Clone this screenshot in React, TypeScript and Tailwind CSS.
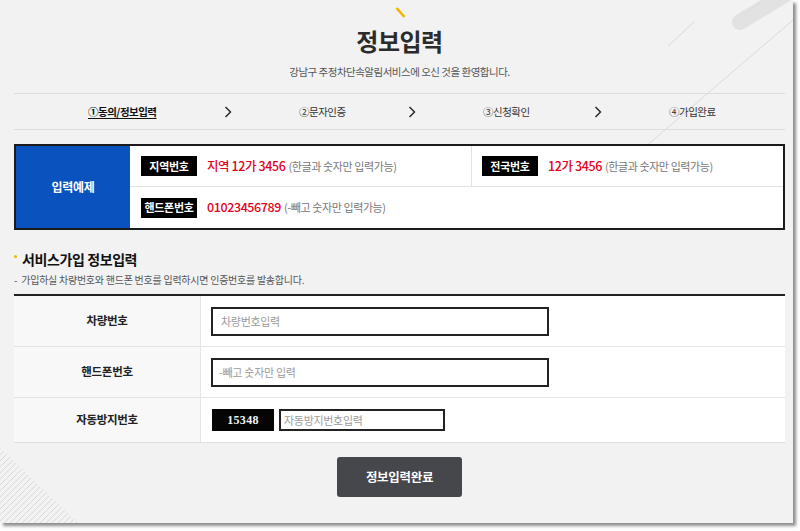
import React from "react";

const KR = { fontFamily: '"Noto Sans CJK KR", "Noto Sans", sans-serif' };

function Chevron() {
  return (
    <svg width="12" height="14" viewBox="0 0 12 14" className="shrink-0">
      <polyline points="3.5,2 8.5,7 3.5,12" fill="none" stroke="#222" strokeWidth="1.4" />
    </svg>
  );
}

function Tag({ children }: { children: React.ReactNode }) {
  return (
    <div className="w-[56px] h-[20px] bg-black text-white font-bold text-[11px] leading-none flex items-center justify-center shrink-0 tracking-[-0.3px]">
      {children}
    </div>
  );
}

export default function App() {
  return (
    <div className="w-[800px] h-[531px] bg-white" style={KR}>
      <div className="relative w-[793px] h-[523px] bg-[#f2f2f2] overflow-hidden shadow-[3px_3px_3px_rgba(0,0,0,0.45)]">
        {/* decorations */}
        <svg className="absolute left-0 top-0 pointer-events-none" width="793" height="523">
          <line x1="740" y1="22" x2="786" y2="-6" stroke="#e2e2e2" strokeWidth="16" strokeLinecap="round" />
          <line x1="668" y1="46" x2="694" y2="22" stroke="#d8d8d8" strokeWidth="1" />
          <line x1="800" y1="14" x2="630" y2="160" stroke="#dadada" strokeWidth="1" />
          <line x1="762" y1="0" x2="742" y2="17" stroke="#dcdcdc" strokeWidth="1" />
          <defs>
            <clipPath id="tri">
              <polygon points="0,448 0,523 78,523" />
            </clipPath>
          </defs>
          <g clipPath="url(#tri)" stroke="#d9d9d9" strokeWidth="1">
            {Array.from({ length: 30 }).map((_, i) => (
              <line key={i} x1={-80 + i * 6} y1={523} x2={-80 + i * 6 + 80} y2={443} />
            ))}
          </g>
        </svg>

        <div className="relative pl-[14px] pr-[8px] flex flex-col">
          {/* slash */}
          <div className="flex justify-center pt-[7px] pl-[2px]">
            <svg width="11" height="11" viewBox="0 0 11 11">
              <line x1="1.5" y1="1" x2="9.5" y2="10" stroke="#f4b400" strokeWidth="2.6" />
            </svg>
          </div>
          <h1 className="mt-[8px] text-center text-[24px] leading-[30px] font-bold text-[#2b2b2b] tracking-[-0.5px]">정보입력</h1>
          <p className="mt-[8px] text-center text-[10.5px] leading-[16px] text-[#555] tracking-[-0.5px]">
            강남구 주정차단속알림서비스에 오신 것을 환영합니다.
          </p>

          {/* steps */}
          <div className="mt-[13px] border-t border-b border-[#dcdcdc] h-[37px] flex items-center pl-[74px] text-[10.5px] tracking-[-0.5px] text-[#333]">
            <div className="w-[134px]">
              <span className="underline underline-offset-2 font-bold text-[#111]">①동의/정보입력</span>
            </div>
            <Chevron />
            <div className="w-[107px] ml-[65px]">②문자인증</div>
            <Chevron />
            <div className="w-[109px] ml-[65px]">③신청확인</div>
            <Chevron />
            <div className="ml-[65px]">④가입완료</div>
          </div>

          {/* example box */}
          <div className="mt-[14px] flex border-2 border-[#1a1a1a] h-[86px]">
            <div className="w-[114px] bg-[#0a52bd] flex items-center justify-center text-white font-bold text-[12px] tracking-[-0.3px]">
              입력예제
            </div>
            <div className="flex-1 flex flex-col bg-white">
              <div className="flex h-[41px] border-b border-[#e2e2e2]">
                <div className="w-[342px] border-r border-[#e2e2e2] flex items-center pl-[11px]">
                  <Tag>지역번호</Tag>
                  <span className="ml-[10px] text-[12.5px] font-medium text-[#e3001b] tracking-[-0.4px]">지역 12가 3456</span>
                  <span className="ml-[3px] text-[11px] text-[#777] tracking-[-0.4px]">(한글과 숫자만 입력가능)</span>
                </div>
                <div className="flex-1 flex items-center pl-[10px]">
                  <Tag>전국번호</Tag>
                  <span className="ml-[10px] text-[12.5px] font-medium text-[#e3001b] tracking-[-0.4px]">12가 3456</span>
                  <span className="ml-[3px] text-[11px] text-[#777] tracking-[-0.4px]">(한글과 숫자만 입력가능)</span>
                </div>
              </div>
              <div className="flex-1 flex items-center pl-[11px]">
                <Tag>핸드폰번호</Tag>
                <span className="ml-[10px] text-[12.5px] font-medium text-[#e3001b] tracking-[-0.4px]">01023456789</span>
                <span className="ml-[3px] text-[11px] text-[#777] tracking-[-0.4px]">(-빼고 숫자만 입력가능)</span>
              </div>
            </div>
          </div>

          {/* section heading */}
          <div className="mt-[20px] flex items-center h-[18px]">
            <span className="w-[3px] h-[3px] rounded-full bg-[#f4b400] mr-[5px] mt-[-6px]"></span>
            <h2 className="text-[14px] font-bold text-[#111] tracking-[-0.4px] leading-[18px]">서비스가입 정보입력</h2>
          </div>
          <p className="mt-[5px] text-[10px] leading-[14px] text-[#555] tracking-[-0.25px]">
            <span className="mr-[4px]">-</span>가입하실 차량번호와 핸드폰 번호를 입력하시면 인증번호를 발송합니다.
          </p>

          {/* form table */}
          <div className="mt-[7px] border-t-2 border-t-[#222] border-b border-b-[#dedede] bg-white">
            <div className="flex h-[51px] border-b border-[#e4e4e4]">
              <div className="w-[187px] bg-[#f8f8f8] border-r border-[#e6e6e6] flex items-center justify-center text-[11.5px] font-bold text-[#222] tracking-[-0.3px]">
                차량번호
              </div>
              <div className="flex-1 flex items-center pl-[10px]">
                <input
                  className="w-[338px] h-[29px] border-2 border-[#222] bg-white pl-[8px] text-[11px] outline-none placeholder:text-[#9a9a9a] tracking-[-0.3px]"
                  placeholder="차량번호입력"
                />
              </div>
            </div>
            <div className="flex h-[51px] border-b border-[#e4e4e4]">
              <div className="w-[187px] bg-[#f8f8f8] border-r border-[#e6e6e6] flex items-center justify-center text-[11.5px] font-bold text-[#222] tracking-[-0.3px]">
                핸드폰번호
              </div>
              <div className="flex-1 flex items-center pl-[10px]">
                <input
                  className="w-[338px] h-[29px] border-2 border-[#222] bg-white pl-[6px] text-[11px] outline-none placeholder:text-[#9a9a9a] tracking-[-0.3px]"
                  placeholder="-빼고 숫자만 입력"
                />
              </div>
            </div>
            <div className="flex h-[44px]">
              <div className="w-[187px] bg-[#f8f8f8] border-r border-[#e6e6e6] flex items-center justify-center text-[11.5px] font-bold text-[#222] tracking-[-0.3px]">
                자동방지번호
              </div>
              <div className="flex-1 flex items-center pl-[11px]">
                <div
                  className="w-[62px] h-[22px] bg-[#050505] flex items-center justify-center text-[#f4f4f4] text-[11px] font-bold tracking-[0.3px]"
                  style={{ fontFamily: '"Liberation Serif", serif' }}
                >
                  <span className="text-[12px]">15348</span>
                </div>
                <input
                  className="ml-[5px] w-[166px] h-[22px] border-2 border-[#222] bg-white pl-[3px] text-[11px] outline-none placeholder:text-[#9a9a9a] tracking-[-0.3px]"
                  placeholder="자동방지번호입력"
                />
              </div>
            </div>
          </div>

          {/* button */}
          <div className="mt-[14px] flex justify-center">
            <button className="w-[125px] h-[40px] rounded-[3px] bg-[#46464d] text-white text-[12.5px] font-semibold tracking-[-0.3px]">
              정보입력완료
            </button>
          </div>
        </div>
      </div>
    </div>
  );
}
